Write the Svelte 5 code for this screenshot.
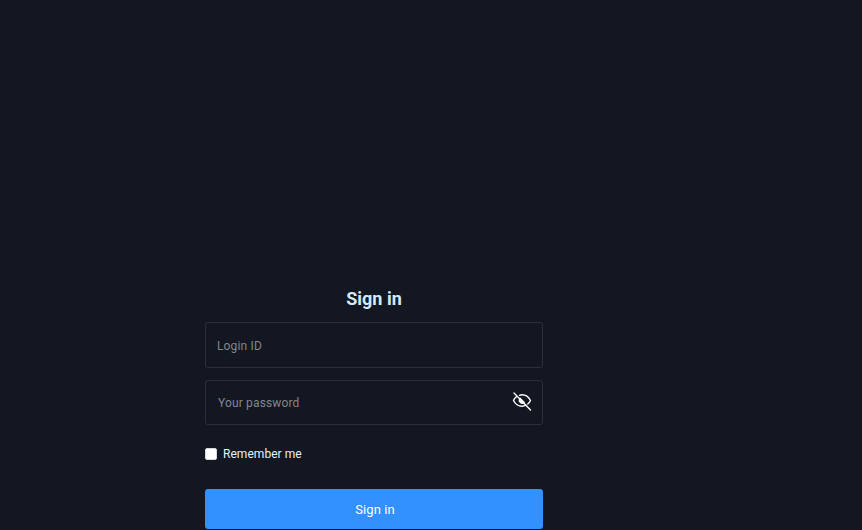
<script>
  let showPassword = $state(false);
  let remember = $state(false);
  let loginId = $state("");
  let password = $state("");
</script>

<main class="page">
  <form class="login" onsubmit={(e) => e.preventDefault()}>
    <h1>Sign in</h1>
    <div class="field first">
      <input type="text" placeholder="Login ID" bind:value={loginId} />
    </div>
    <div class="field second">
      <input type={showPassword ? "text" : "password"} placeholder="Your password" bind:value={password} />
      <button type="button" class="eye" aria-label="Toggle password" onclick={() => (showPassword = !showPassword)}>
        <svg width="20" height="20" viewBox="0 0 20 20" fill="none" stroke="currentColor" stroke-width="1.4" stroke-linecap="round" stroke-linejoin="round">
          <path d="M7.500 4.300C8.300 4 9.100 3.800 10 3.800c4.200 0 7.200 3.200 8.500 5.700-.6 1.200-1.500 2.400-2.700 3.500M4.600 5.600C3.100 6.600 2 8 1.500 9.500c1.300 2.600 4.300 5.700 8.500 5.700 1.500 0 2.800-.4 4-1" />
          <path d="M8 7.300a3 3 0 0 0 4.200 4.200z" fill="currentColor" />
          <path d="M2 2l16.500 17" />
        </svg>
      </button>
    </div>
    <label class="remember">
      <input type="checkbox" bind:checked={remember} />
      <span>Remember me</span>
    </label>
    <button type="submit" class="submit">Sign in</button>
  </form>
</main>

<style>
  :global(body) {
    margin: 0;
    background: #121722;
  }
  .page {
    height: 530px;
    box-sizing: border-box;
    padding: 288px 0 0 205px;
    background: #121722;
    font-family: Roboto, "Liberation Sans", sans-serif;
    overflow: hidden;
  }
  .login {
    width: 338px;
    display: flex;
    flex-direction: column;
  }
  h1 {
    margin: 0 0 12px;
    font-size: 18px;
    line-height: 22px;
    font-weight: 700;
    text-align: center;
    color: #d6e8fa;
  }
  .field {
    display: flex;
    align-items: center;
    box-sizing: border-box;
    border: 1px solid #2a2f3a;
    border-radius: 3px;
  }
  .first {
    height: 46px;
    margin-bottom: 12px;
    padding: 2px 0 0 11px;
  }
  .second {
    height: 45px;
    padding: 0 10px 0 12px;
  }
  .field input {
    flex: 1;
    min-width: 0;
    padding: 0;
    border: 0;
    outline: 0;
    background: transparent;
    font: 12px Roboto, sans-serif;
    letter-spacing: 0.15px;
    color: #e8edf3;
  }
  .field input::placeholder {
    color: #82868d;
    opacity: 1;
  }
  .eye {
    display: flex;
    margin-bottom: 4px;
    padding: 0;
    border: 0;
    background: none;
    color: #fff;
    cursor: pointer;
  }
  .remember {
    display: flex;
    align-items: center;
    gap: 6px;
    margin-top: 22px;
    height: 14px;
    font-size: 12px;
    letter-spacing: 0.05px;
    color: #e8f0f8;
    cursor: pointer;
  }
  .remember input {
    appearance: none;
    box-sizing: border-box;
    width: 12px;
    height: 12px;
    margin: 0;
    border: 1px solid #d5d8dc;
    border-radius: 2px;
    background: #fff;
  }
  .remember input:checked {
    background: #3390ff;
    border-color: #3390ff;
  }
  .submit {
    height: 40px;
    margin-top: 28px;
    padding-left: 8px;
    border: 0;
    border-radius: 3px;
    background: #3390ff;
    color: #fff;
    font: 13px Roboto, sans-serif;
    letter-spacing: 0.1px;
    cursor: pointer;
  }
</style>
